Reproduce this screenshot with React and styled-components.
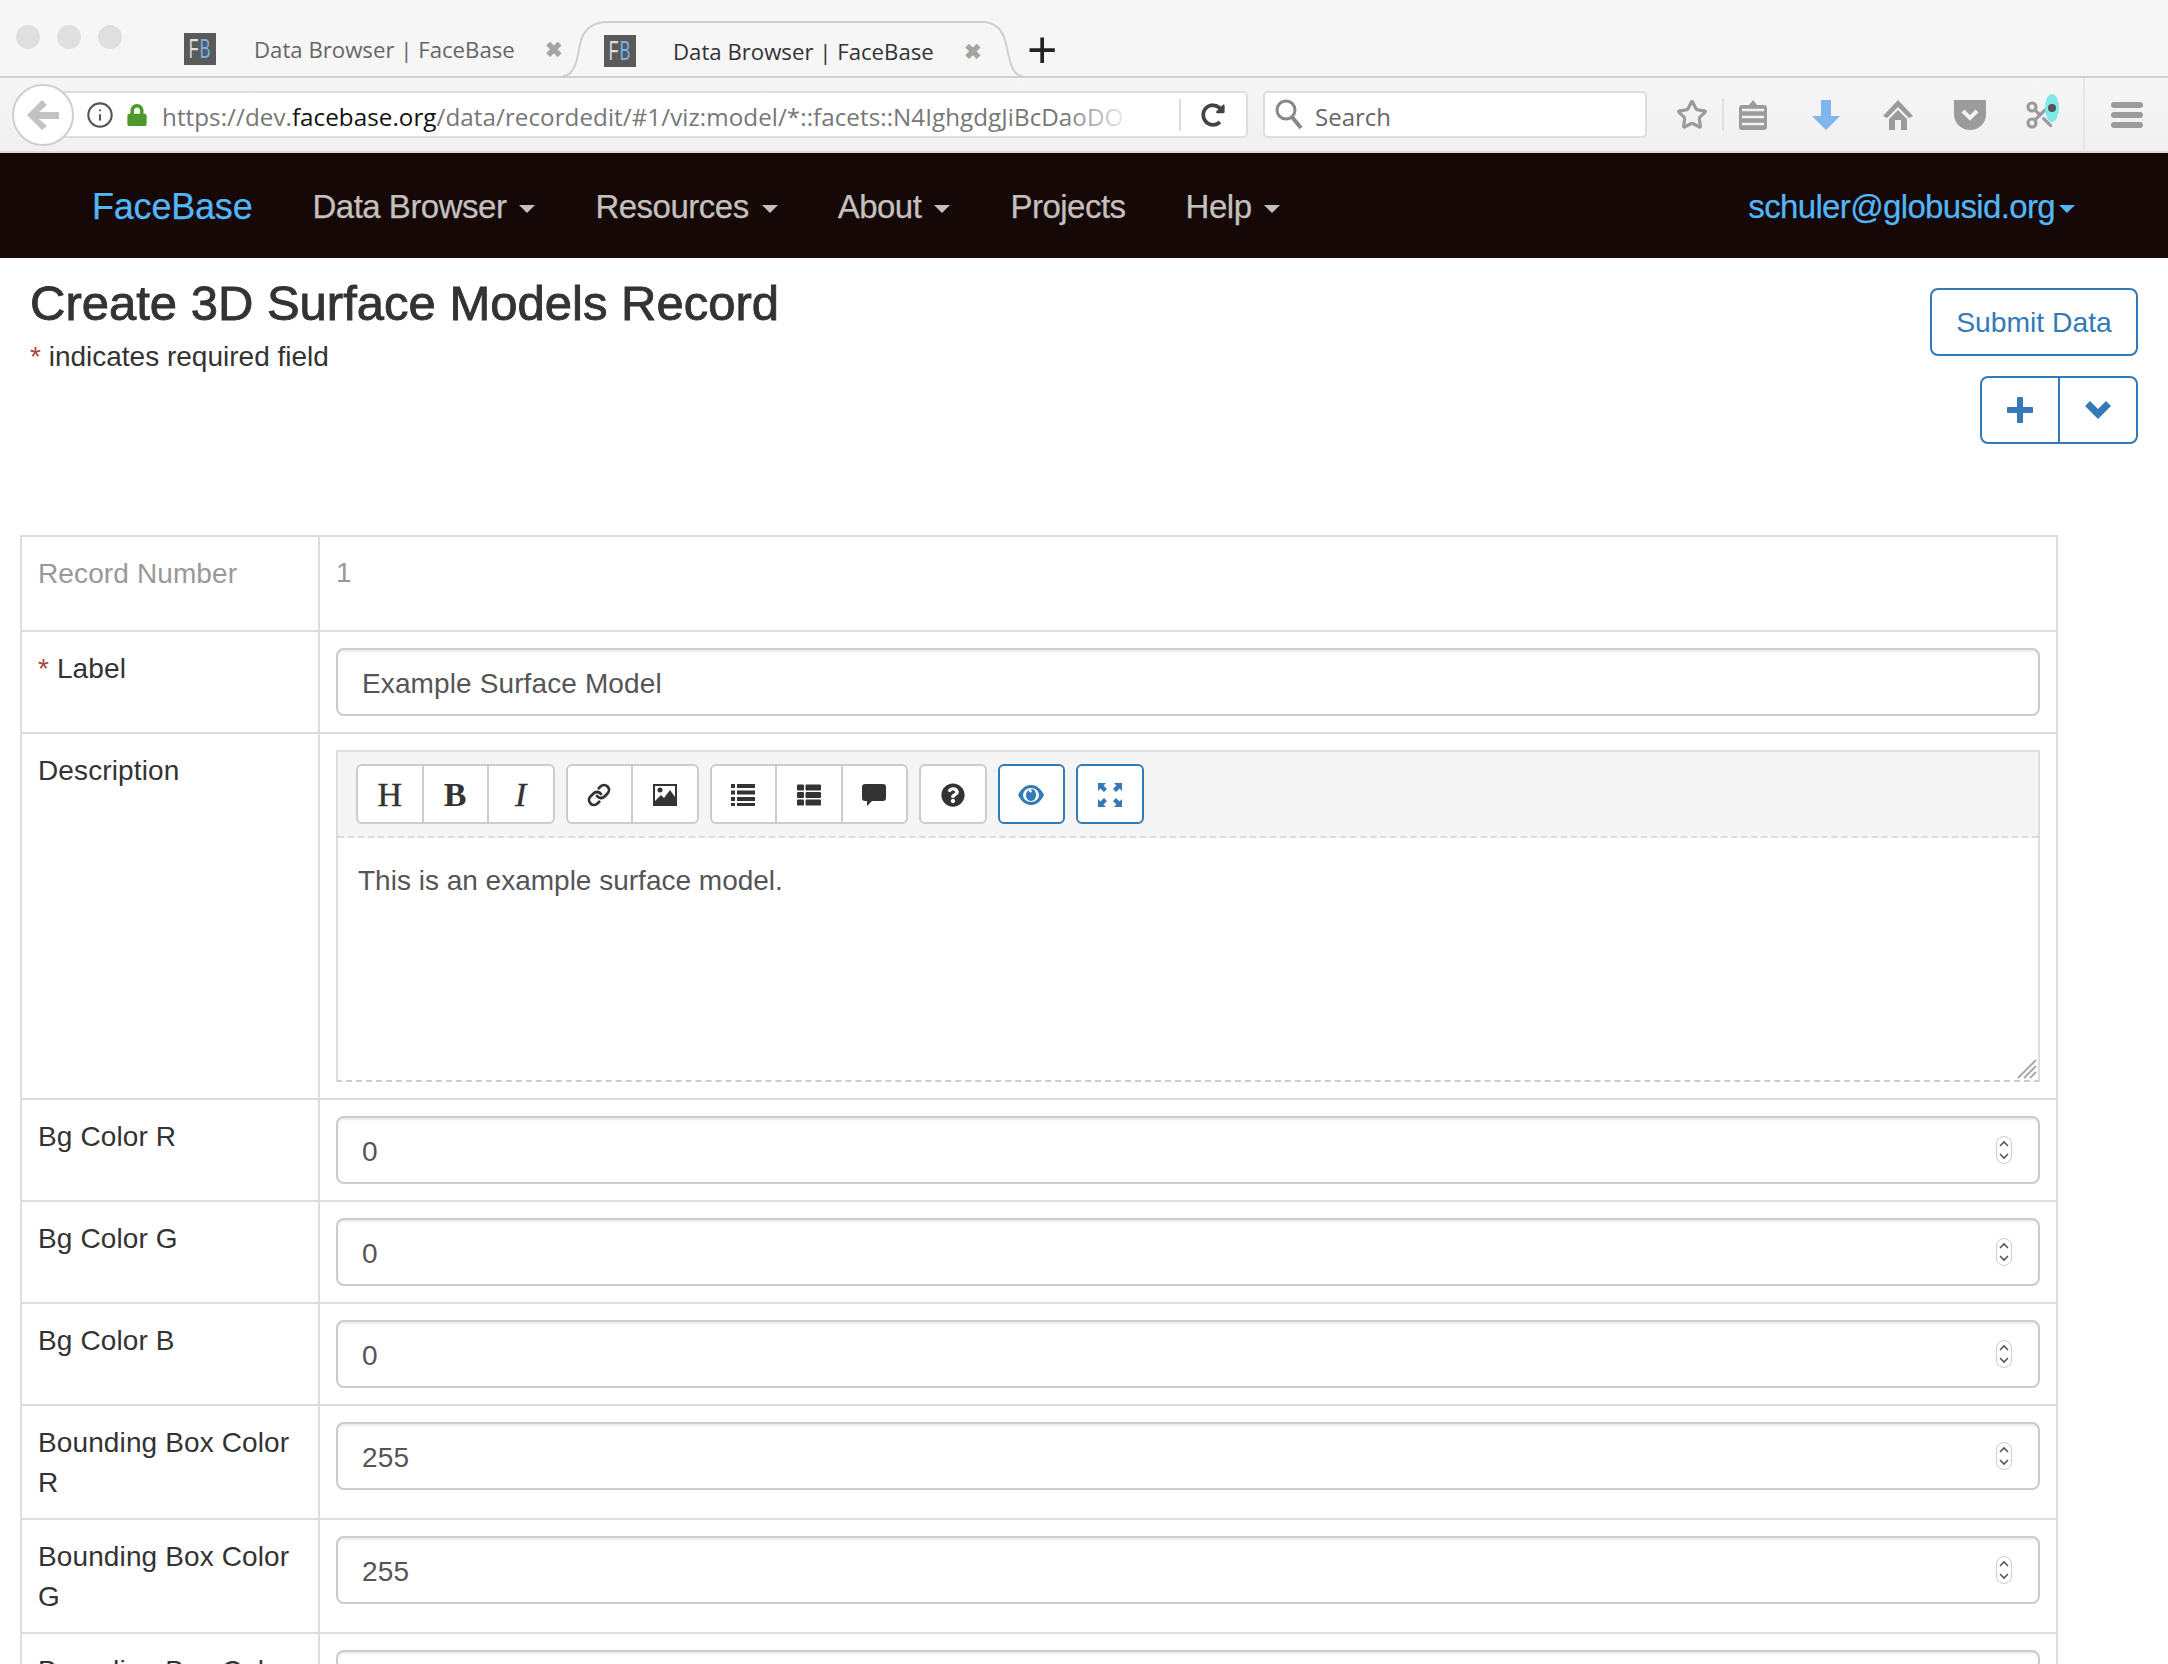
import React from 'react';
import styled, { createGlobalStyle } from 'styled-components';
import { FaThList, FaQuestionCircle, FaLock, FaRedoAlt } from 'react-icons/fa';
import { Info, Star, Scissors, Link as LinkIcon } from 'lucide-react';

const Global = createGlobalStyle`
  html, body { margin: 0; padding: 0; background: #fff; }
  body { font-family: "Liberation Sans", Arial, sans-serif; color: #333; }
  #root { width: 2168px; height: 1664px; overflow: hidden; }
  * { box-sizing: border-box; }
`;

const TabStrip = styled.div`
  height: 78px;
  display: flex;
  align-items: flex-end;
  background: #f6f6f6;
  border-bottom: 2px solid #cfcfcf;
`;
const Lights = styled.div`
  display: flex;
  gap: 17px;
  padding: 0 0 27px 16px;
  width: 167px;
`;
const Light = styled.span`
  width: 24px;
  height: 24px;
  border-radius: 50%;
  background: #dfdfdf;
`;
const Tab = styled.div`
  position: relative;
  display: flex;
  align-items: center;
  height: ${p => (p.$active ? '58px' : '56px')};
  width: ${p => (p.$active ? '460px' : '396px')};
  padding: ${p => (p.$active ? '4px 0 0 41px' : '2px 0 0 17px')};
  margin-bottom: ${p => (p.$active ? '-2px' : '0')};
  color: ${p => (p.$active ? '#333' : '#666')};
  font-family: "Open Sans", sans-serif;
  font-size: 22.2px;
`;
const TabOutline = styled.svg`
  position: absolute;
  left: 0;
  top: 0;
  width: 100%;
  height: 100%;
`;
const Favicon = styled.span`
  position: relative;
  flex: none;
  width: 32px;
  height: 32px;
  display: flex;
  justify-content: center;
  background: #5a5a5a;
  color: #ddd;
  font-family: "Liberation Sans", sans-serif;
  font-size: 27px;
  line-height: 32px;
  b { font-weight: 400; color: #6fb3ee; }
`;
const FaviconLetters = styled.span`
  display: inline-block;
  letter-spacing: 2px;
  transform: scaleX(0.6);
  white-space: nowrap;
`;
const TabTitle = styled.span`
  position: relative;
  margin-left: ${p => (p.$active ? '37px' : '38px')};
  width: 259px;
  flex: none;
  white-space: nowrap;
`;
const TabClose = styled.span`
  position: relative;
  margin-left: 32px;
  color: #a4a4a4;
  font-size: 21px;
  font-weight: 700;
`;
const NewTab = styled.span`
  font-family: "Liberation Sans", sans-serif;
  font-size: 52px;
  line-height: 56px;
  height: 54px;
  margin-left: 4px;
  color: #222;
`;

const ToolRow = styled.div`
  height: 75px;
  display: flex;
  align-items: center;
  position: relative;
  padding: 0 0 0 12px;
  background: linear-gradient(#f6f6f6, #f0f0f0);
  border-bottom: 2px solid #dcdcdc;
`;
const BackButton = styled.div`
  position: relative;
  z-index: 1;
  flex: none;
  width: 62px;
  height: 62px;
  border-radius: 50%;
  border: 2px solid #cfcfcf;
  background: #fff;
  display: flex;
  align-items: center;
  justify-content: center;
`;
const UrlBar = styled.div`
  flex: none;
  width: 1186px;
  height: 47px;
  margin-left: -12px;
  padding-left: 22px;
  display: flex;
  align-items: center;
  background: #fff;
  border: 2px solid #dedede;
  border-radius: 0 5px 5px 0;
  color: #777;
  font-family: "Open Sans", sans-serif;
  font-size: 24.2px;
`;
const UrlText = styled.span`
  position: relative;
  margin: 3px 45px 0 14px;
  width: 972px;
  flex: none;
  overflow: hidden;
  white-space: nowrap;
  letter-spacing: 0.05px;
  b { font-weight: 400; color: #111; }
  &::after {
    content: '';
    position: absolute;
    right: 0;
    top: 0;
    bottom: 0;
    width: 70px;
    background: linear-gradient(to right, rgba(255,255,255,0), #fff);
  }
`;
const UrlDivider = styled.span`
  flex: none;
  width: 2px;
  height: 32px;
  background: #ddd;
`;
const SearchBox = styled.div`
  flex: none;
  width: 384px;
  height: 47px;
  margin-left: 15px;
  padding-left: 10px;
  display: flex;
  align-items: center;
  gap: 10px;
  background: #fff;
  border: 2px solid #dedede;
  border-radius: 5px;
  color: #666;
  font-family: "Open Sans", sans-serif;
  font-size: 24px;
`;
const SearchLabel = styled.span`
  margin-top: 3px;
`;
const ToolIcons = styled.div`
  flex: 1;
  height: 100%;
  display: flex;
  align-items: center;
  padding-left: 15px;
`;
const ToolIcon = styled.span`
  flex: none;
  width: ${p => p.$w || 72}px;
  display: flex;
  justify-content: center;
  align-items: center;
  color: #9b9b9b;
`;
const ToolSep = styled.span`
  flex: none;
  width: 2px;
  height: 32px;
  background: #e0e0e0;
`;
const ExtensionDot = styled.svg`
  margin: -14px 0 0 -12px;
`;
const MenuArea = styled.div`
  flex: none;
  width: 85px;
  height: 100%;
  border-left: 2px solid #e6e6e6;
  display: flex;
  flex-direction: column;
  align-items: center;
  justify-content: center;
  gap: 4px;
`;
const MenuBar = styled.span`
  width: 32px;
  height: 6px;
  border-radius: 3px;
  background: #9b9b9b;
`;

const Navbar = styled.nav`
  height: 105px;
  padding: 2px 0 0 62px;
  display: flex;
  align-items: center;
  background: #150806;
  -webkit-text-stroke: 0.25px;
`;
const Brand = styled.a`
  padding: 0 30px;
  color: #52b6f7;
  font-size: 36px;
  letter-spacing: -0.2px;
`;
const NavLink = styled.a`
  padding: 0 30px;
  color: #c4c0bf;
  font-size: 33px;
  letter-spacing: -0.5px;
`;
const Caret = styled.span`
  display: inline-block;
  margin-left: ${p => (p.$near ? '4px' : '13px')};
  vertical-align: middle;
  border-top: 8px solid ${p => p.$color || '#c4c0bf'};
  border-left: 8px solid transparent;
  border-right: 8px solid transparent;
`;
const UserLink = styled.a`
  margin-left: auto;
  margin-right: 93px;
  color: #52b6f7;
  font-size: 33px;
  letter-spacing: -0.65px;
  white-space: nowrap;
`;

const PageHeader = styled.header`
  height: 277px;
  display: flex;
  justify-content: space-between;
  padding: 20px 30px 0;
`;
const Title = styled.h2`
  margin: 0;
  font-size: 49px;
  line-height: 50px;
  font-weight: 400;
  color: #333;
  -webkit-text-stroke: 0.9px #333;
`;
const Required = styled.p`
  margin: 9px 0 0;
  font-size: 28px;
  line-height: 40px;
`;
const Asterisk = styled.span`
  color: #a94442;
`;
const Actions = styled.div`
  display: flex;
  flex-direction: column;
  align-items: flex-end;
  gap: 20px;
  margin-top: 10px;
`;
const SubmitButton = styled.button`
  width: 208px;
  height: 68px;
  padding: 0;
  background: #fff;
  border: 2px solid #337ab7;
  border-radius: 8px;
  color: #337ab7;
  font: 28.3px "Liberation Sans", sans-serif;
`;
const ButtonGroup = styled.div`
  display: flex;
  border: 2px solid #337ab7;
  border-radius: 8px;
  height: 68px;
  width: 158px;
`;
const GroupButton = styled.span`
  flex: 1;
  display: flex;
  align-items: center;
  justify-content: center;
  color: #337ab7;
  & + & { border-left: 2px solid #337ab7; }
`;

const FormWrap = styled.div`
  padding-left: 20px;
`;
const Table = styled.table`
  width: 2038px;
  table-layout: fixed;
  border-collapse: collapse;
  font-size: 28px;
  line-height: 40px;
  letter-spacing: 0.12px;
`;
const LabelCell = styled.td`
  width: 298px;
  height: ${p => p.$height || 'auto'};
  padding: 17px 10px 15px 16px;
  vertical-align: top;
  border: 2px solid #ddd;
  color: ${p => (p.$muted ? '#999' : '#333')};
`;
const ValueCell = styled.td`
  padding: 16px;
  vertical-align: top;
  border: 2px solid #ddd;
  color: ${p => (p.$muted ? '#999' : '#333')};
`;
const Field = styled.div`
  position: relative;
  height: 68px;
  padding: 3px 24px 0;
  display: flex;
  align-items: center;
  border: 2px solid #ccc;
  border-radius: 8px;
  background: #fff;
  box-shadow: inset 0 2px 2px rgba(0,0,0,.075);
  color: #555;
`;
const Spinner = styled.span`
  position: absolute;
  right: 26px;
  top: 50%;
  transform: translateY(-50%);
  width: 16px;
  height: 28px;
  border-radius: 8px;
  border: 1px solid #ccc;
  background: #fff;
  display: flex;
`;
const Editor = styled.div`
  position: relative;
  height: 332px;
  border: 2px solid #ddd;
  border-bottom: 2px dashed #ccc;
`;
const EditorBar = styled.div`
  height: 86px;
  padding: 12px 18px 0;
  display: flex;
  gap: 11px;
  align-items: flex-start;
  background: #f5f5f5;
  border-bottom: 2px dashed #ddd;
`;
const BtnGroup = styled.div`
  display: flex;
  height: 60px;
  background: #fff;
  border: 2px solid ${p => (p.$primary ? '#337ab7' : '#ccc')};
  border-radius: 6px;
  color: ${p => (p.$primary ? '#337ab7' : '#333')};
`;
const BarBtn = styled.span`
  box-sizing: content-box;
  width: 63.5px;
  padding-top: 2px;
  display: flex;
  align-items: center;
  justify-content: center;
  font-size: 24px;
  & + & { border-left: 2px solid #ccc; }
`;
const Letter = styled.span`
  font-family: "Liberation Serif", serif;
  font-size: 34px;
  font-weight: ${p => (p.$bold ? 700 : 400)};
  font-style: ${p => (p.$italic ? 'italic' : 'normal')};
  -webkit-text-stroke: ${p => (p.$bold ? 0 : '0.4px')};
`;
const EditorText = styled.div`
  padding: 23px 20px;
  color: #555;
  letter-spacing: 0;
`;
const Grip = styled.svg`
  position: absolute;
  right: 0;
  bottom: 0;
`;

const rows = [
  ['Bg Color R', '0'],
  ['Bg Color G', '0'],
  ['Bg Color B', '0'],
  ['Bounding Box Color R', '255'],
  ['Bounding Box Color G', '255'],
  ['Bounding Box Color B', '255'],
];

const FaviconFB = () => <Favicon><FaviconLetters>F<b>B</b></FaviconLetters></Favicon>;

const TabShape = () => (
  <TabOutline viewBox="0 0 460 58" preserveAspectRatio="none">
    <path d="M0 56 C10 56 14 44 17 24 C20 10 28 2 45 2 L419 2 C432 2 440 10 443 24 C447 44 450 56 460 56" fill="#f6f6f6" stroke="#cfcfcf" strokeWidth="2" />
  </TabOutline>
);

const NumSpin = () => (
  <Spinner>
    <svg width="14" height="26" viewBox="0 0 14 26" fill="none" stroke="#555" strokeWidth="1.6">
      <path d="M3 9 L7 5 L11 9" />
      <path d="M3 17 L7 21 L11 17" />
    </svg>
  </Spinner>
);

const GlyphList = () => (
  <svg width="24" height="24" viewBox="0 0 24 24" fill="#333">
    <rect x="0" y="1" width="4" height="4" /><rect x="6" y="1" width="18" height="4" />
    <rect x="0" y="7.5" width="4" height="4" /><rect x="6" y="7.5" width="18" height="4" />
    <rect x="0" y="14" width="4" height="4" /><rect x="6" y="14" width="18" height="4" />
    <rect x="0" y="20" width="4" height="3" /><rect x="6" y="20" width="18" height="3" />
  </svg>
);

const GlyphImage = () => (
  <svg width="24" height="24" viewBox="0 0 24 24">
    <rect x="0" y="1" width="24" height="22" fill="#333" />
    <path d="M2 3 H22 V14 L17 7 L11 15 L8 12 L2 18 Z" fill="#fff" />
    <circle cx="7" cy="7" r="2.5" fill="#333" />
  </svg>
);

const GlyphComment = () => (
  <svg width="24" height="24" viewBox="0 0 24 24" fill="#333">
    <path d="M3 1 H21 Q24 1 24 4 V15 Q24 18 21 18 H10 L5 23 V18 H3 Q0 18 0 15 V4 Q0 1 3 1 Z" />
  </svg>
);

const GlyphEye = () => (
  <svg width="26" height="24" viewBox="0 0 26 24">
    <path d="M13 2 C20 2 24 8 26 12 C24 16 20 22 13 22 C6 22 2 16 0 12 C2 8 6 2 13 2 Z" fill="#337ab7" />
    <ellipse cx="13" cy="12" rx="8" ry="7" fill="#fff" />
    <path d="M13 6 C17 6 18 9 18 12 C18 15 16 18 13 18 C10 18 8 15 8 12 C8 10 9 8 11 7 C10.5 9 12 10 14 9 Z" fill="#337ab7" />
  </svg>
);

const GlyphFullscreen = () => (
  <svg width="24" height="24" viewBox="0 0 24 24" fill="#337ab7">
    <path d="M0 0 H8 L5.6 2.4 L9 6 L6 9 L2.4 5.6 L0 8 Z" />
    <path d="M24 0 H16 L18.4 2.4 L15 6 L18 9 L21.6 5.6 L24 8 Z" />
    <path d="M0 24 H8 L5.6 21.6 L9 18 L6 15 L2.4 18.4 L0 16 Z" />
    <path d="M24 24 H16 L18.4 21.6 L15 18 L18 15 L21.6 18.4 L24 16 Z" />
  </svg>
);

const GlyphPlus = () => (
  <svg width="26" height="26" viewBox="0 0 26 26" fill="#337ab7">
    <path d="M10 1 Q10 0 11 0 H15 Q16 0 16 1 V10 H25 Q26 10 26 11 V15 Q26 16 25 16 H16 V25 Q16 26 15 26 H11 Q10 26 10 25 V16 H1 Q0 16 0 15 V11 Q0 10 1 10 H10 Z" />
  </svg>
);

const GlyphChevron = () => (
  <svg width="26" height="18" viewBox="0 0 26 18" fill="#337ab7">
    <path d="M0 5 L5 0 L13 8 L21 0 L26 5 L13 18 Z" />
  </svg>
);

const App = () => (
  <>
    <Global />
    <TabStrip>
      <Lights><Light /><Light /><Light /></Lights>
      <Tab>
        <FaviconFB />
        <TabTitle>Data Browser | FaceBase</TabTitle>
        <TabClose>✖</TabClose>
      </Tab>
      <Tab $active>
        <TabShape />
        <FaviconFB />
        <TabTitle $active>Data Browser | FaceBase</TabTitle>
        <TabClose>✖</TabClose>
      </Tab>
      <NewTab>+</NewTab>
    </TabStrip>
    <ToolRow>
      <BackButton>
        <svg width="34" height="32" viewBox="0 0 34 32" fill="#c2c2c2">
          <path d="M16 1 L21 6 L13 13 L33 13 L33 20 L13 20 L21 27 L16 31 L1 16 Z" />
        </svg>
      </BackButton>
      <UrlBar>
        <Info size={28} color="#555" strokeWidth={1.8} />
        <FaLock size={22} color="#4c9a2a" style={{ marginLeft: 12 }} />
        <UrlText>https://dev.<b>facebase.org</b>/data/recordedit/#1/viz:model/*::facets::N4IghgdgJiBcDaoDO</UrlText>
        <UrlDivider />
        <FaRedoAlt size={24} color="#444" style={{ marginLeft: 20 }} />
      </UrlBar>
      <SearchBox>
        <svg width="30" height="32" viewBox="0 0 30 32" fill="none" stroke="#888" strokeWidth="3">
          <circle cx="11" cy="11" r="9" />
          <path d="M17 18 L26 29" strokeWidth="4" />
        </svg>
        <SearchLabel>Search</SearchLabel>
      </SearchBox>
      <ToolIcons>
        <ToolIcon $w={60}><Star size={32} strokeWidth={2.4} /></ToolIcon>
        <ToolSep />
        <ToolIcon $w={58}>
          <svg width="28" height="30" viewBox="0 0 28 30" fill="#9b9b9b">
            <path d="M14 0 L18 5 L25 5 Q28 5 28 8 L28 27 Q28 30 25 30 L3 30 Q0 30 0 27 L0 8 Q0 5 3 5 L10 5 Z" />
            <path d="M3 10 H25 M3 17 H25 M3 24 H25" stroke="#f3f3f3" strokeWidth="2.4" />
          </svg>
        </ToolIcon>
        <ToolIcon $w={88}>
          <svg width="28" height="30" viewBox="0 0 28 30" fill="#7fb5ef">
            <path d="M9 0 H19 V16 H28 L14 30 L0 16 H9 Z" />
          </svg>
        </ToolIcon>
        <ToolIcon $w={56}>
          <svg width="30" height="30" viewBox="0 0 30 30" fill="#9b9b9b">
            <path d="M15 0 L30 16 L26 18 L15 7 L4 18 L0 16 Z" />
            <path d="M15 10 L24 19 V30 H18 V20 H12 V30 H6 V19 Z" />
          </svg>
        </ToolIcon>
        <ToolIcon $w={88}>
          <svg width="32" height="30" viewBox="0 0 32 30" fill="#9b9b9b">
            <path d="M0 0 H32 V14 C32 24 24 30 16 30 C8 30 0 24 0 14 Z" />
            <path d="M9 11 L16 18 L23 11" fill="none" stroke="#f3f3f3" strokeWidth="4" />
          </svg>
        </ToolIcon>
        <ToolIcon $w={56}>
          <Scissors size={32} strokeWidth={2.4} />
          <ExtensionDot width="16" height="30" viewBox="0 0 16 30">
            <ellipse cx="8" cy="15" rx="7" ry="14" fill="#7fe9ec" />
            <circle cx="8" cy="15" r="4" fill="#555" />
          </ExtensionDot>
        </ToolIcon>
      </ToolIcons>
      <MenuArea><MenuBar /><MenuBar /><MenuBar /></MenuArea>
    </ToolRow>
    <Navbar>
      <Brand>FaceBase</Brand>
      <NavLink>Data Browser<Caret /></NavLink>
      <NavLink>Resources<Caret /></NavLink>
      <NavLink>About<Caret /></NavLink>
      <NavLink>Projects</NavLink>
      <NavLink>Help<Caret /></NavLink>
      <UserLink>schuler@globusid.org<Caret $near $color="#52b6f7" /></UserLink>
    </Navbar>
    <PageHeader>
      <div>
        <Title>Create 3D Surface Models Record</Title>
        <Required><Asterisk>*</Asterisk> indicates required field</Required>
      </div>
      <Actions>
        <SubmitButton>Submit Data</SubmitButton>
        <ButtonGroup>
          <GroupButton><GlyphPlus /></GroupButton>
          <GroupButton><GlyphChevron /></GroupButton>
        </ButtonGroup>
      </Actions>
    </PageHeader>
    <FormWrap>
      <Table>
        <tbody>
          <tr>
            <LabelCell $muted $height="95px">Record Number</LabelCell>
            <ValueCell $muted>1</ValueCell>
          </tr>
          <tr>
            <LabelCell><Asterisk>*</Asterisk> Label</LabelCell>
            <ValueCell><Field>Example Surface Model</Field></ValueCell>
          </tr>
          <tr>
            <LabelCell>Description</LabelCell>
            <ValueCell>
              <Editor>
                <EditorBar>
                  <BtnGroup>
                    <BarBtn><Letter>H</Letter></BarBtn>
                    <BarBtn><Letter $bold>B</Letter></BarBtn>
                    <BarBtn><Letter $italic>I</Letter></BarBtn>
                  </BtnGroup>
                  <BtnGroup>
                    <BarBtn><LinkIcon size={24} strokeWidth={2.8} /></BarBtn>
                    <BarBtn><GlyphImage /></BarBtn>
                  </BtnGroup>
                  <BtnGroup>
                    <BarBtn><GlyphList /></BarBtn>
                    <BarBtn><FaThList /></BarBtn>
                    <BarBtn><GlyphComment /></BarBtn>
                  </BtnGroup>
                  <BtnGroup><BarBtn><FaQuestionCircle /></BarBtn></BtnGroup>
                  <BtnGroup $primary><BarBtn><GlyphEye /></BarBtn></BtnGroup>
                  <BtnGroup $primary><BarBtn><GlyphFullscreen /></BarBtn></BtnGroup>
                </EditorBar>
                <EditorText>This is an example surface model.</EditorText>
                <Grip width="22" height="22" viewBox="0 0 22 22" stroke="#aaa" strokeWidth="2">
                  <path d="M2 20 L20 2 M8 20 L20 8 M14 20 L20 14" />
                </Grip>
              </Editor>
            </ValueCell>
          </tr>
          {rows.map(([label, value]) => (
            <tr key={label}>
              <LabelCell>{label}</LabelCell>
              <ValueCell><Field>{value}<NumSpin /></Field></ValueCell>
            </tr>
          ))}
        </tbody>
      </Table>
    </FormWrap>
  </>
);

export default App;
